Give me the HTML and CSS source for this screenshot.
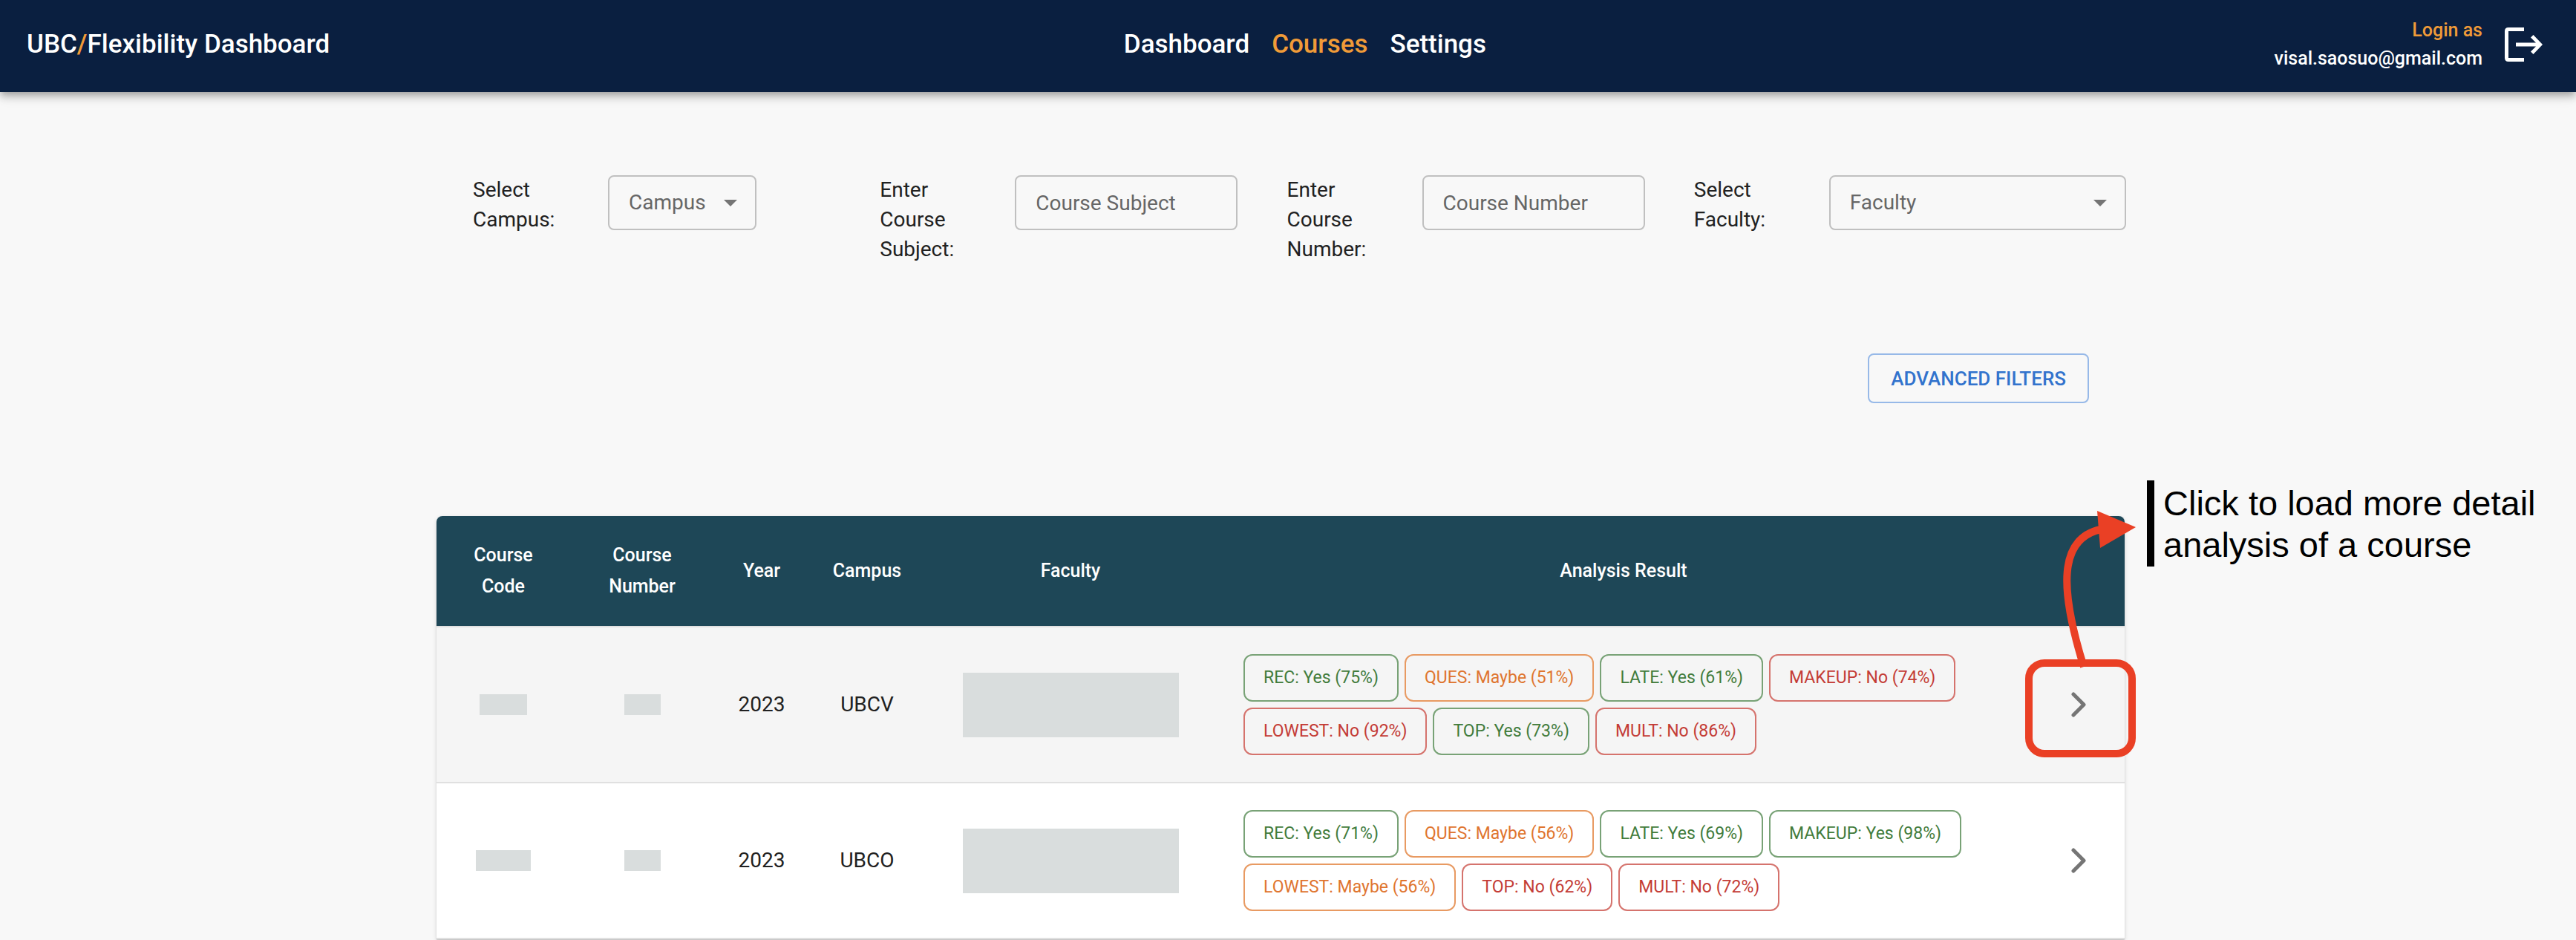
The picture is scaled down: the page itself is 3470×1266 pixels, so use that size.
FILE: index.html
```html
<!DOCTYPE html>
<html lang="en">
<head>
  <meta charset="utf-8">
  <title>UBC/Flexibility Dashboard</title>
  <link rel="stylesheet" href="styles.css">
</head>
<body>
  <header class="topbar">
    <div class="brand">UBC<span class="accent">/</span>Flexibility Dashboard</div>
    <nav class="nav">
      <a class="nav-link" href="#dashboard">Dashboard</a>
      <a class="nav-link accent" href="#courses" aria-current="page">Courses</a>
      <a class="nav-link" href="#settings">Settings</a>
    </nav>
    <div class="account">
      <div class="account-text">
        <span class="accent">Login as</span>
        <span>visal.saosuo@gmail.com</span>
      </div>
      <button class="icon-button" type="button" aria-label="Log out">
        <svg width="60" height="60" viewBox="0 0 60 60" fill="#fff" aria-hidden="true">
          <path d="M30 7H9Q4 7 4 12V48Q4 53 9 53H30V48H9V12H30Z"/>
          <path d="M42.500 17L55 30L42.500 43L39 39.500L46 32.500H19V27.500H46L39 20.500Z"/>
        </svg>
      </button>
    </div>
  </header>

  <main class="page">
    <form class="filters">
      <div class="field">
        <label class="field-label" for="campus">Select Campus:</label>
        <div class="select select-small">
          <select class="control" id="campus"><option>Campus</option></select>
        </div>
      </div>
      <div class="field">
        <label class="field-label" for="subject">Enter Course Subject:</label>
        <input class="control control-text" id="subject" type="text" placeholder="Course Subject">
      </div>
      <div class="field">
        <label class="field-label" for="number">Enter Course Number:</label>
        <input class="control control-text" id="number" type="text" placeholder="Course Number">
      </div>
      <div class="field">
        <label class="field-label" for="faculty">Select Faculty:</label>
        <div class="select select-large">
          <select class="control" id="faculty"><option>Faculty</option></select>
        </div>
      </div>
    </form>

    <div class="actions">
      <button class="outlined-button" type="button">ADVANCED FILTERS</button>
    </div>

    <section class="results">
      <table class="courses">
        <colgroup>
          <col class="col-code"><col class="col-number"><col class="col-year"><col class="col-campus"><col class="col-faculty"><col><col class="col-open">
        </colgroup>
        <thead>
          <tr>
            <th>Course Code</th>
            <th>Course Number</th>
            <th>Year</th>
            <th>Campus</th>
            <th>Faculty</th>
            <th>Analysis Result</th>
            <th></th>
          </tr>
        </thead>
        <tbody>
          <tr>
            <td><div class="mask mask-code"></div></td>
            <td><div class="mask mask-number"></div></td>
            <td>2023</td>
            <td>UBCV</td>
            <td><div class="mask mask-faculty"></div></td>
            <td class="analysis">
              <div class="chips">
                <span class="chip yes">REC: Yes (75%)</span>
                <span class="chip maybe">QUES: Maybe (51%)</span>
                <span class="chip yes">LATE: Yes (61%)</span>
                <span class="chip no">MAKEUP: No (74%)</span>
                <span class="chip no">LOWEST: No (92%)</span>
                <span class="chip yes">TOP: Yes (73%)</span>
                <span class="chip no">MULT: No (86%)</span>
              </div>
            </td>
            <td>
              <button class="icon-button open-button" type="button" aria-label="Open course">
                <svg width="24" height="36" viewBox="0 0 24 36" fill="none" stroke="#757575" stroke-width="5" stroke-linecap="round" stroke-linejoin="round" aria-hidden="true"><path d="M6 4L20 18L6 32"/></svg>
              </button>
            </td>
          </tr>
          <tr>
            <td><div class="mask mask-code mask-wide"></div></td>
            <td><div class="mask mask-number"></div></td>
            <td>2023</td>
            <td>UBCO</td>
            <td><div class="mask mask-faculty"></div></td>
            <td class="analysis">
              <div class="chips">
                <span class="chip yes">REC: Yes (71%)</span>
                <span class="chip maybe">QUES: Maybe (56%)</span>
                <span class="chip yes">LATE: Yes (69%)</span>
                <span class="chip yes">MAKEUP: Yes (98%)</span>
                <span class="chip maybe">LOWEST: Maybe (56%)</span>
                <span class="chip no">TOP: No (62%)</span>
                <span class="chip no">MULT: No (72%)</span>
              </div>
            </td>
            <td>
              <button class="icon-button open-button" type="button" aria-label="Open course">
                <svg width="24" height="36" viewBox="0 0 24 36" fill="none" stroke="#757575" stroke-width="5" stroke-linecap="round" stroke-linejoin="round" aria-hidden="true"><path d="M6 4L20 18L6 32"/></svg>
              </button>
            </td>
          </tr>
        </tbody>
      </table>

      <!-- Callout over the open button of the first row -->
      <div class="callout-ring"></div>
      <svg class="callout-arrow" width="120" height="220" viewBox="0 0 120 220" aria-hidden="true">
        <path d="M50 218C17 112 16 45 73 33" fill="none" stroke="#ea4025" stroke-width="10"/>
        <path d="M68 8L120 30L72 58Z" fill="#ea4025"/>
      </svg>
      <p class="callout-note">Click to load more detail<br>analysis of a course</p>
    </section>
  </main>
</body>
</html>
```

FILE: styles.css
```css
* {
  box-sizing: border-box;
}

body {
  margin: 0;
  min-height: 100vh;
  overflow-x: hidden;
  background: #f8f8f8;
  color: #212121;
  font-family: Roboto, "Liberation Sans", sans-serif;
  font-size: 28px;
  line-height: 40px;
}

button,
input,
select {
  font: inherit;
}

.accent {
  color: #f09b38;
}

.topbar {
  display: flex;
  align-items: center;
  justify-content: space-between;
  height: 124px;
  padding: 0 40px 0 36px;
  background: #0a1f40;
  color: #fff;
  font-weight: 500;
  box-shadow: 0 4px 8px -2px rgba(0, 0, 0, 0.2), 0 8px 10px rgba(0, 0, 0, 0.14), 0 2px 20px rgba(0, 0, 0, 0.12);
}

.brand,
.nav {
  font-size: 35px;
  padding-bottom: 4px;
}

.brand {
  padding-right: 8px;
}

.nav {
  display: flex;
  gap: 30px;
}

.nav-link {
  color: #fff;
  text-decoration: none;
}

.nav-link.accent {
  color: #f09b38;
}

.account {
  display: flex;
  align-items: center;
  gap: 26px;
  padding-bottom: 4px;
}

.account-text {
  display: flex;
  flex-direction: column;
  text-align: right;
  font-size: 25px;
  line-height: 38px;
}

.icon-button {
  display: inline-flex;
  padding: 0;
  border: 0;
  background: none;
}

.open-button {
  display: flex;
  margin: 0 auto;
}

.page {
  padding: 112px 608px 0 588px;
}

.filters {
  display: grid;
  grid-template-columns: repeat(4, minmax(0, 1fr));
  padding: 0 32px 0 49px;
}

.field {
  display: flex;
  align-items: flex-start;
}

.field-label {
  flex: 0 0 182px;
  padding-right: 50px;
}

.select {
  position: relative;
  flex: none;
}

.select::after {
  content: "";
  position: absolute;
  top: 33px;
  right: 26px;
  border: 9px solid transparent;
  border-top-color: #757575;
  border-bottom: 0;
  pointer-events: none;
}

.select-small {
  width: 200px;
}

.select-large {
  width: 400px;
}

.control {
  display: block;
  width: 100%;
  height: 74px;
  padding: 0 26px;
  border: 2px solid #c0c0c0;
  border-radius: 8px;
  background: transparent;
  color: #666;
  appearance: none;
}

.control-text {
  flex: none;
  width: 300px;
}

.control::placeholder {
  color: #666;
  opacity: 1;
}

.actions {
  display: flex;
  justify-content: flex-end;
  padding: 120px 48px 0 0;
}

.outlined-button {
  height: 67px;
  padding: 0 29px;
  border: 2px solid #97b9e8;
  border-radius: 8px;
  background: transparent;
  color: #3273cd;
  font-size: 26px;
  font-weight: 500;
}

.results {
  position: relative;
  margin-top: 152px;
}

.courses {
  width: 100%;
  table-layout: fixed;
  border-spacing: 0;
  border-radius: 8px 8px 0 0;
  background: #fff;
  text-align: center;
  box-shadow: 0 2px 2px rgba(0, 0, 0, 0.14), 0 2px 6px rgba(0, 0, 0, 0.12);
}

.col-code {
  width: 180px;
}

.col-number {
  width: 194px;
}

.col-year {
  width: 128px;
}

.col-campus {
  width: 156px;
}

.col-faculty {
  width: 392px;
}

.col-open {
  width: 126px;
}

.courses th {
  height: 150px;
  padding: 0 32px;
  border-bottom: 2px solid #e0e0e0;
  background: #1e4757;
  background-clip: padding-box;
  color: #fff;
  font-size: 25px;
  font-weight: 500;
  line-height: 42px;
}

.courses th:nth-child(-n + 4) {
  padding: 0 16px;
}

.courses th:nth-child(-n + 2) {
  padding: 0 40px;
}

.courses th:first-child {
  border-top-left-radius: 8px;
}

.courses th:last-child {
  border-top-right-radius: 8px;
}

.courses td {
  padding: 0;
  border-bottom: 2px solid #e0e0e0;
}

.courses tbody tr:nth-child(odd) {
  background: #f5f5f5;
}

.courses .analysis {
  padding: 36px 37px;
}

.mask {
  height: 28px;
  margin: 0 auto;
  background: #d9dddd;
}

.mask-code {
  width: 64px;
}

.mask-wide {
  width: 74px;
}

.mask-number {
  width: 49px;
}

.mask-faculty {
  width: 291px;
  height: 87px;
}

.chips {
  display: flex;
  flex-wrap: wrap;
  gap: 8px;
}

.chip {
  height: 64px;
  padding: 0 25px;
  border: 2px solid;
  border-radius: 12px;
  font-size: 23px;
  line-height: 60px;
}

.yes {
  border-color: #78a276;
  color: #427c3c;
}

.maybe {
  border-color: #e89a62;
  color: #df752f;
}

.no {
  border-color: #d5736d;
  color: #c43c36;
}

.callout-ring {
  position: absolute;
  top: 193px;
  right: -15px;
  width: 149px;
  height: 132px;
  border: 10px solid #ea4025;
  border-radius: 26px;
}

.callout-arrow {
  position: absolute;
  top: -15px;
  right: -15px;
}

.callout-note {
  position: absolute;
  top: -48px;
  left: 100%;
  margin: 0 0 0 30px;
  padding: 3px 0 1px 12px;
  border-left: 10px solid #000;
  color: #000;
  font-family: "Liberation Sans", Arial, sans-serif;
  font-size: 47px;
  line-height: 56px;
  white-space: nowrap;
}
```
